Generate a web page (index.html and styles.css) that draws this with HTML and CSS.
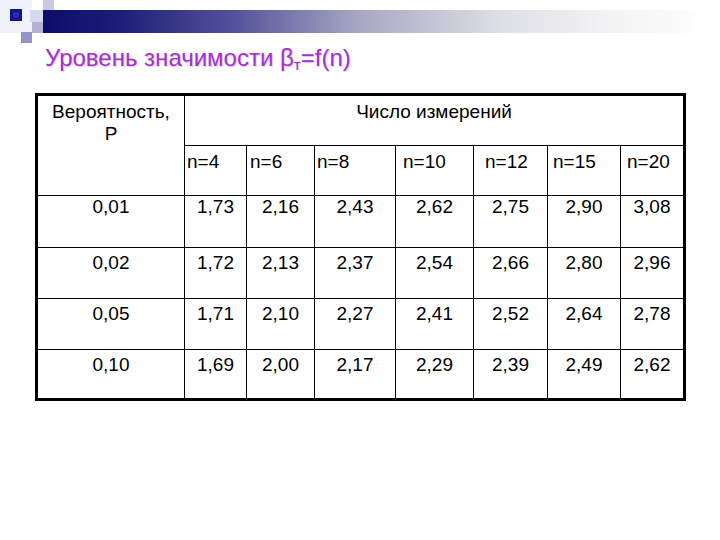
FILE: index.html
```html
<!DOCTYPE html>
<html lang="ru">
<head>
<meta charset="utf-8">
<title>Уровень значимости</title>
<link rel="stylesheet" href="styles.css">
</head>
<body>
<div class="slide">
  <svg class="deco" width="720" height="44" viewBox="0 0 720 44" aria-hidden="true">
    <defs>
      <linearGradient id="bar" x1="0" y1="0" x2="1" y2="0">
        <stop offset="0" stop-color="#0c0c6c"/>
        <stop offset="0.12" stop-color="#1e1e78"/>
        <stop offset="0.3" stop-color="#55559c"/>
        <stop offset="0.48" stop-color="#a6a6c2"/>
        <stop offset="0.7" stop-color="#dedee6"/>
        <stop offset="0.86" stop-color="#f2f2f4"/>
        <stop offset="1" stop-color="#fdfdfd"/>
      </linearGradient>
    </defs>
    <rect x="0" y="0" width="32" height="33" fill="#f1f1f9"/>
    <rect x="43" y="10" width="652" height="23" fill="url(#bar)"/>
    <rect x="43" y="0" width="11" height="10" fill="#c9c9e1"/>
    <rect x="30" y="10" width="13" height="12" fill="#d9d9ed"/>
    <rect x="32" y="22" width="11" height="11" fill="#b2b2d8"/>
    <rect x="21" y="32" width="11" height="11" fill="#9494c8"/>
    <rect x="10" y="9" width="12" height="12" fill="#14148e"/>
    <rect x="13" y="12" width="6" height="6" fill="#2a2aa6"/>
  </svg>
  <h1 class="title">Уровень значимости β<sub class="sub">т</sub>=f(n)</h1>
  <div class="table-wrap">
    <div class="grid">
      <div class="cell head prob">Вероятность,<br>Р</div>
      <div class="cell head span">Число измерений</div>
      <div class="cell nh pl2">n=4</div>
      <div class="cell nh pl3">n=6</div>
      <div class="cell nh pl2">n=8</div>
      <div class="cell nh pl7">n=10</div>
      <div class="cell nh pl11">n=12</div>
      <div class="cell nh pl5">n=15</div>
      <div class="cell nh pl6">n=20</div>

      <div class="cell r1">0,01</div>
      <div class="cell r1">1,73</div>
      <div class="cell r1">2,16</div>
      <div class="cell r1">2,43</div>
      <div class="cell r1">2,62</div>
      <div class="cell r1">2,75</div>
      <div class="cell r1">2,90</div>
      <div class="cell r1">3,08</div>

      <div class="cell rn">0,02</div>
      <div class="cell rn">1,72</div>
      <div class="cell rn">2,13</div>
      <div class="cell rn">2,37</div>
      <div class="cell rn">2,54</div>
      <div class="cell rn">2,66</div>
      <div class="cell rn">2,80</div>
      <div class="cell rn">2,96</div>

      <div class="cell rn">0,05</div>
      <div class="cell rn">1,71</div>
      <div class="cell rn">2,10</div>
      <div class="cell rn">2,27</div>
      <div class="cell rn">2,41</div>
      <div class="cell rn">2,52</div>
      <div class="cell rn">2,64</div>
      <div class="cell rn">2,78</div>

      <div class="cell rn">0,10</div>
      <div class="cell rn">1,69</div>
      <div class="cell rn">2,00</div>
      <div class="cell rn">2,17</div>
      <div class="cell rn">2,29</div>
      <div class="cell rn">2,39</div>
      <div class="cell rn">2,49</div>
      <div class="cell rn">2,62</div>
    </div>
  </div>
</div>
</body>
</html>
```
FILE: styles.css
```css
html, body {
  margin: 0;
  padding: 0;
  background: #ffffff;
}

.slide {
  width: 720px;
  height: 540px;
  overflow: hidden;
  font-family: "Liberation Sans", Arial, sans-serif;
  color: #000000;
}

.deco {
  display: block;
}

.title {
  margin: 0 0 21px 45px;
  font-size: 24px;
  line-height: 28px;
  font-weight: normal;
  color: #a033cc;
  text-shadow: 1px 1px 1px rgba(214, 140, 214, 0.55);
}

.sub {
  font-size: 15px;
  line-height: 0;
  vertical-align: -4px;
}

.table-wrap {
  margin-left: 35px;
  width: 645px;
  border: 3px solid #000000;
}

.grid {
  display: grid;
  grid-template-columns: 146px 61px 67px 80px 77px 73px 72px 62px;
  grid-template-rows: 49px 49px 51px 50px 50px 48px;
  gap: 1px;
  background: #000000;
}

.cell {
  background: #ffffff;
  font-size: 19px;
  line-height: 22px;
  text-align: center;
}

.head {
  padding-top: 5px;
}

.prob {
  grid-row: 1 / span 2;
}

.span {
  grid-column: 2 / span 7;
}

.nh {
  text-align: left;
  padding-top: 5px;
}

.pl2 { padding-left: 2px; }
.pl3 { padding-left: 3px; }
.pl5 { padding-left: 5px; }
.pl6 { padding-left: 6px; }
.pl7 { padding-left: 7px; }
.pl11 { padding-left: 11px; }

.r1 {
  padding-top: 0;
}

.rn {
  padding-top: 4px;
}
```
